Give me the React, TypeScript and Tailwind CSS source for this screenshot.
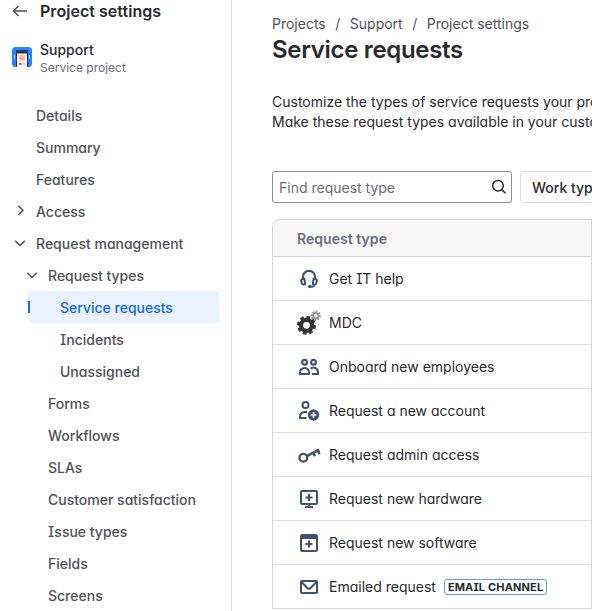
import React from "react";

type IconProps = { children: React.ReactNode };

function RowIcon({ children }: IconProps) {
  return (
    <svg
      width="24"
      height="24"
      viewBox="0 0 24 24"
      fill="none"
      stroke="#42526e"
      strokeWidth="2"
      strokeLinejoin="round"
      strokeLinecap="butt"
      className="shrink-0"
    >
      {children}
    </svg>
  );
}

const headset = (
  <RowIcon>
    <path d="M6 12V9.8a6 6 0 0 1 12 0V12" strokeWidth="2.2" />
    <path d="M5.5 12l1.9-.3.8 5.4-1.6.3a1.8 1.8 0 0 1-2-1.5l-.3-1.9A1.7 1.7 0 0 1 5.5 12zM18.5 12l-1.9-.3-.8 5.4 1.6.3a1.8 1.8 0 0 0 2-1.5l.3-1.9a1.7 1.7 0 0 0-1.2-2z" />
    <path d="M17 17.5v.3a1.9 1.9 0 0 1-1.9 1.9H13" />
    <circle cx="12.8" cy="19.5" r="1.7" fill="#42526e" stroke="none" />
  </RowIcon>
);

function gearPath(cx: number, cy: number, outer: number, inner: number, hole: number, turn: number) {
  const points: string[] = [];
  const step = Math.PI / 4;
  for (let i = 0; i < 8; i++) {
    const a = i * step + turn;
    [[-0.27, inner], [-0.2, outer], [0.2, outer], [0.27, inner]].forEach(([d, r]) =>
      points.push(`${(cx + r * Math.cos(a + d)).toFixed(2)} ${(cy + r * Math.sin(a + d)).toFixed(2)}`),
    );
  }
  return `M${points.join("L")}ZM${cx - hole} ${cy}a${hole} ${hole} 0 1 0 ${hole * 2} 0a${hole} ${hole} 0 1 0 ${-hole * 2} 0Z`;
}

const gears = (
  <svg width="24" height="24" viewBox="0 0 24 24" className="shrink-0 overflow-visible">
    <path fillRule="evenodd" fill="#333" d={gearPath(9.5, 14.3, 9.6, 7.5, 3.4, 0.22)} />
    <path fillRule="evenodd" fill="#999" d={gearPath(18.8, 4.8, 5.2, 3.7, 1.8, 0.15)} />
  </svg>
);

const people = (
  <RowIcon>
    <circle cx="7.5" cy="7.2" r="2.4" strokeWidth="2.2" />
    <circle cx="16.5" cy="7.2" r="2.4" strokeWidth="2.2" />
    <path d="M3 19v-1.5A4.5 4.5 0 0 1 7.5 13a4.5 4.5 0 0 1 4.5 4.5V19zM13.5 13.7a4.5 4.5 0 0 1 7.5 3.8V19h-6" />
  </RowIcon>
);

const personAdd = (
  <RowIcon>
    <circle cx="8.5" cy="6" r="3" />
    <path d="M9.5 19H3v-1.5A4.5 4.5 0 0 1 7.5 13H10" />
    <circle cx="16.5" cy="16" r="5.7" fill="#42526e" stroke="none" />
    <path d="M16.5 13v6M13.5 16h6" stroke="#fff" strokeWidth="1.7" />
  </RowIcon>
);

const key = (
  <RowIcon>
    <circle cx="6.3" cy="14.8" r="3.9" strokeWidth="2.3" />
    <path d="M9.8 13.1L22.2 6.7M21 7.2l1.3 4M16.3 9.7l1.6 3.6" strokeWidth="2.6" />
  </RowIcon>
);

const monitor = (
  <RowIcon>
    <rect x="4" y="4" width="16" height="13" rx="1" />
    <path d="M12 17v3M8 20h8M12 7v7M8.5 10.5h7" />
  </RowIcon>
);

const windowAdd = (
  <RowIcon>
    <rect x="4" y="4" width="16" height="16" rx="1.5" />
    <path d="M4 6h16" strokeWidth="4" />
    <path d="M12 9.5v7M8.5 13h7" />
  </RowIcon>
);

const mail = (
  <RowIcon>
    <rect x="4" y="6" width="16" height="12" rx="1" />
    <path d="M4.5 7l6.2 6.2a1.8 1.8 0 0 0 2.6 0L19.5 7" />
  </RowIcon>
);

const requestTypes = [
  { name: "Get IT help", icon: headset },
  { name: "MDC", icon: gears },
  { name: "Onboard new employees", icon: people },
  { name: "Request a new account", icon: personAdd },
  { name: "Request admin access", icon: key },
  { name: "Request new hardware", icon: monitor },
  { name: "Request new software", icon: windowAdd },
  { name: "Emailed request", icon: mail, badge: "EMAIL CHANNEL" },
];

function Chevron({ open }: { open: boolean }) {
  return (
    <svg width="16" height="16" viewBox="0 0 16 16" fill="none" stroke="#505258" strokeWidth="1.5" className="shrink-0">
      <path d={open ? "M3.3 5.9L8 10.5l4.7-4.6" : "M6.5 2.9l4.4 4.4-4.4 4.4"} />
    </svg>
  );
}

type NavItem = { label: string; indent: string; open?: boolean; active?: boolean };

const nav: NavItem[] = [
  { label: "Details", indent: "pl-9" },
  { label: "Summary", indent: "pl-9" },
  { label: "Features", indent: "pl-9" },
  { label: "Access", indent: "pl-3", open: false },
  { label: "Request management", indent: "pl-3", open: true },
  { label: "Request types", indent: "pl-6", open: true },
  { label: "Service requests", indent: "pl-8", active: true },
  { label: "Incidents", indent: "pl-15" },
  { label: "Unassigned", indent: "pl-15" },
  { label: "Forms", indent: "pl-12" },
  { label: "Workflows", indent: "pl-12" },
  { label: "SLAs", indent: "pl-12" },
  { label: "Customer satisfaction", indent: "pl-12" },
  { label: "Issue types", indent: "pl-12" },
  { label: "Fields", indent: "pl-12" },
  { label: "Screens", indent: "pl-12" },
];

function NavRow({ item }: { item: NavItem }) {
  if (item.active) {
    return (
      <li className="ml-7 mr-3 flex h-8 items-center rounded bg-[#e9f2fe] text-[#1868db]">
        <span className="h-3 w-0.5 bg-[#1868db]" />
        <span className="pt-0.5 pl-[30px]">{item.label}</span>
      </li>
    );
  }
  return (
    <li className={`flex h-8 items-center gap-2 ${item.indent}`}>
      {item.open !== undefined && <Chevron open={item.open} />}
      <span className="pt-0.5">{item.label}</span>
    </li>
  );
}

function ProjectAvatar() {
  return (
    <svg width="20" height="20" viewBox="0 0 20 20" className="mb-px shrink-0">
      <rect width="20" height="20" rx="3.5" fill="#2684ff" />
      <path d="M4 4a1 1 0 0 1 1-1h10a1 1 0 0 1 1 1v16H4z" fill="#253858" />
      <path d="M5 6.5h10V20H5z" fill="#f4f5f7" />
      <circle cx="10" cy="10.8" r="3.2" fill="#ffbdad" />
      <path d="M8.6 10h.6M10.9 10h.6M8.7 11.8q1.3 1.1 2.6 0" stroke="#e5664a" strokeWidth=".6" fill="none" />
      <path d="M7 16h2.5v2H7z" fill="#ff5630" />
      <path d="M10.5 16H13v2h-2.5z" fill="#b3d4ff" />
      <path d="M2.5 8v4M17.5 8v4" stroke="#b3d4ff" strokeWidth="1" fill="none" />
    </svg>
  );
}

export default function App() {
  return (
    <div className="flex h-[611px] w-[592px] overflow-hidden bg-white font-['Inter',sans-serif] text-sm leading-5 text-[#292a2e] [font-feature-settings:'cv11','cv08']">
      <aside className="h-full w-[232px] shrink-0 overflow-hidden border-r border-[#dddee1]">
        <div className="flex h-[22px] items-center gap-3 pl-3">
          <svg width="16" height="16" viewBox="0 0 16 16" fill="none" stroke="#505258" strokeWidth="1.5">
            <path d="M15 8H1.5M6.5 3L1.5 8l5 5" />
          </svg>
          <h2 className="text-base font-semibold tracking-[0.04px]">Project settings</h2>
        </div>
        <div className="mt-[17px] flex h-[37px] items-center gap-2 pl-3">
          <ProjectAvatar />
          <div>
            <div className="h-[19px] font-medium">Support</div>
            <div className="text-xs leading-[17px] text-[#6b6e76]">Service project</div>
          </div>
        </div>
        <ul className="mt-[23px] font-medium text-[#505258]">
          {nav.map((item) => (
            <NavRow key={item.label} item={item} />
          ))}
        </ul>
      </aside>

      <main className="ml-10 h-full w-80 shrink-0 overflow-hidden">
        <nav className="mt-3.5 flex h-5 gap-[9.5px] text-[#505258]">
          <span>Projects</span>
          <span>/</span>
          <span>Support</span>
          <span>/</span>
          <span>Project settings</span>
        </nav>
        <h1 className="mt-0.5 h-7 text-2xl leading-7 font-semibold tracking-[-0.32px]">Service requests</h1>
        <p className="mt-7 h-10 whitespace-nowrap">
          Customize the types of service requests your project offers.
          <br />
          Make these request types available in your customer portal.
        </p>
        <div className="mt-[39px] flex gap-2">
          <div className="flex h-8 w-60 shrink-0 items-center justify-between rounded-[3px] border border-[#8c8f97] pr-1 pl-1.5 text-[#6b6e76]">
            <span className="pt-0.5">Find request type</span>
            <svg width="16" height="16" viewBox="0 0 16 16" fill="none" stroke="#292a2e" strokeWidth="1.5">
              <circle cx="7" cy="6.8" r="5.3" />
              <path d="M10.8 10.6l3.7 3.7" />
            </svg>
          </div>
          <button className="h-8 shrink-0 rounded-[3px] border border-[#dddee1] px-[11px] pt-0.5 font-medium whitespace-nowrap">
            Work type
          </button>
        </div>
        <div className="mt-4 rounded-tl-lg border border-[#d5d6d9]">
          <div className="flex h-[37px] items-center rounded-tl-lg border-b border-[#d5d6d9] bg-[#f8f8f8] pt-0.5 pl-6 font-semibold tracking-[0.04px] text-[#6b6e76]">
            Request type
          </div>
          {requestTypes.map((type) => (
            <div
              key={type.name}
              className="flex h-11 items-center border-b border-[#dddee1] pl-6 last:h-[43px] last:border-b-0"
            >
              {type.icon}
              <span className="ml-2">{type.name}</span>
              {type.badge && (
                <span className="ml-2 flex h-4 items-center rounded-[3px] border border-[#669df1] px-[3px] text-[11px] leading-3 font-bold tracking-[0.15px]">
                  {type.badge}
                </span>
              )}
            </div>
          ))}
        </div>
      </main>
    </div>
  );
}
